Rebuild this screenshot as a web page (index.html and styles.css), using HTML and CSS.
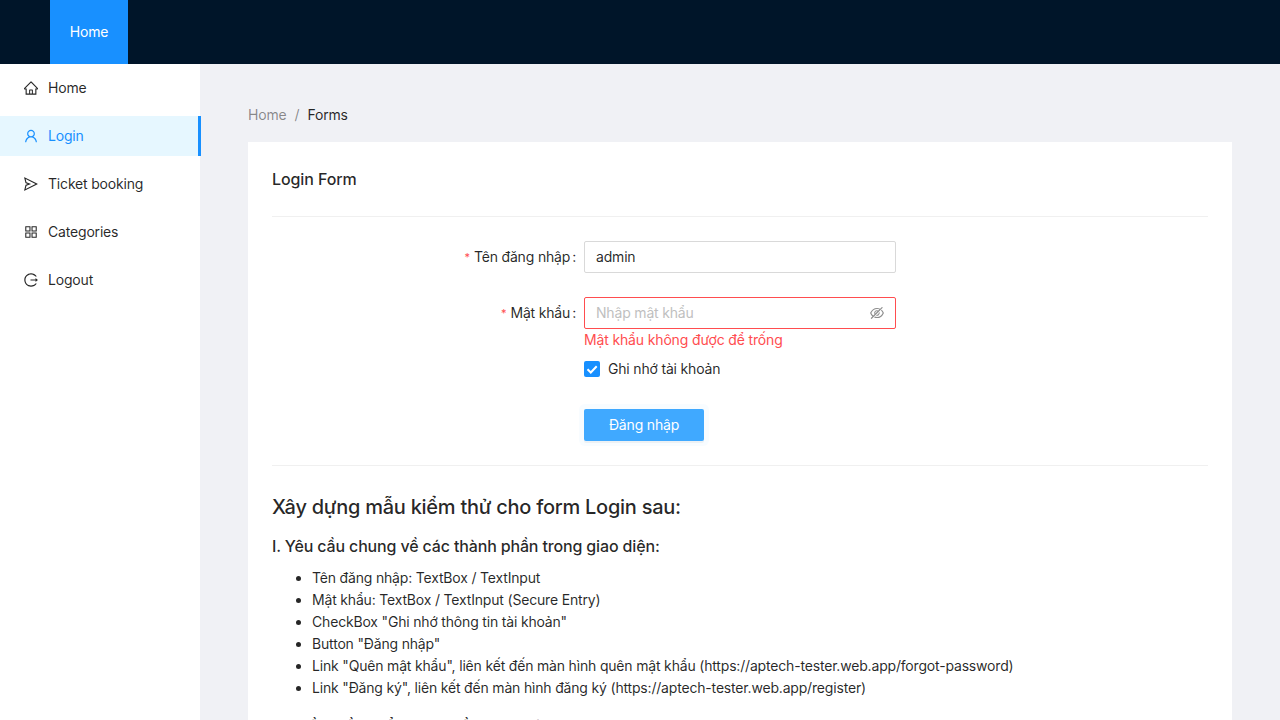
FILE: index.html
```html
<!DOCTYPE html>
<html lang="vi">
<head>
<meta charset="utf-8">
<title>Login</title>
<link rel="stylesheet" href="styles.css">
</head>
<body>
<header class="topbar"><nav><a class="topbar-item">Home</a></nav></header>
<div class="layout">
  <aside class="sidebar">
    <ul class="menu">
      <li class="menu-item"><svg class="icon" viewBox="64 64 896 896"><path d="M946.5 505L560.1 118.8l-25.9-25.9a31.5 31.5 0 00-44.4 0L77.5 505a63.9 63.9 0 00-18.8 46c.4 35.2 29.7 63.3 64.9 63.3h42.5V940h691.8V614.3h43.4c17.1 0 33.2-6.7 45.3-18.8a63.6 63.6 0 0018.7-45.3c0-17-6.7-33.1-18.8-45.2zM568 868H456V664h112v204zm217.9-325.7V868H632V640c0-22.1-17.9-40-40-40H432c-22.1 0-40 17.9-40 40v228H238.1V542.3h-96l370-369.7 23.1 23.1L882 542.3h-96.1z"/></svg><span>Home</span></li>
      <li class="menu-item selected"><svg class="icon" viewBox="64 64 896 896"><path d="M858.5 763.6a374 374 0 00-80.6-119.5 375.63 375.63 0 00-119.5-80.6c-.4-.2-.8-.3-1.2-.5C719.5 518 760 444.7 760 362c0-137-111-248-248-248S264 225 264 362c0 82.7 40.5 156 102.8 201.1-.4.2-.8.3-1.2.5-44.8 18.9-85 46-119.5 80.6a375.63 375.63 0 00-80.6 119.5A371.7 371.7 0 00136 901.8a8 8 0 008 8.2h60c4.4 0 7.9-3.5 8-7.8 2-77.2 33-149.5 87.8-204.3 56.7-56.7 132-87.9 212.2-87.9s155.5 31.2 212.2 87.9C779 752.7 810 825 812 902.2c.1 4.4 3.6 7.8 8 7.8h60a8 8 0 008-8.2c-1-47.8-10.9-94.3-29.5-138.2zM512 534c-45.9 0-89.1-17.9-121.6-50.4S340 407.9 340 362c0-45.9 17.9-89.1 50.4-121.6S466.1 190 512 190s89.1 17.9 121.6 50.4S684 316.1 684 362c0 45.9-17.9 89.1-50.4 121.6S557.9 534 512 534z"/></svg><span>Login</span></li>
      <li class="menu-item"><svg class="icon" viewBox="64 64 896 896"><path d="M931.4 498.9L94.9 79.5c-3.4-1.7-7.3-2.1-11-1.2a15.99 15.99 0 00-11.7 19.3l86.2 352.2c1.3 5.3 5.2 9.6 10.4 11.3l147.7 50.7-147.6 50.7c-5.2 1.8-9.1 6-10.3 11.3L72.2 926.5c-.9 3.7-.5 7.6 1.2 10.9 3.9 7.9 13.5 11.1 21.5 7.2l836.5-417c3.1-1.5 5.6-4.1 7.2-7.1 3.9-8 .7-17.6-7.2-21.6zM170.8 826.3l50.3-205.6 295.2-101.3c2.3-.8 4.2-2.6 5-5 1.4-4.2-.8-8.7-5-10.2L221.1 403 171 198.2l628 314.9-628.2 313.2z"/></svg><span>Ticket booking</span></li>
      <li class="menu-item"><svg class="icon" viewBox="64 64 896 896"><path fill-rule="evenodd" d="M160 144h304a16 16 0 0116 16v304a16 16 0 01-16 16H160a16 16 0 01-16-16V160a16 16 0 0116-16zm52 68v200h200V212zM560 144h304a16 16 0 0116 16v304a16 16 0 01-16 16H560a16 16 0 01-16-16V160a16 16 0 0116-16zm52 68v200h200V212zM160 544h304a16 16 0 0116 16v304a16 16 0 01-16 16H160a16 16 0 01-16-16V560a16 16 0 0116-16zm52 68v200h200V612zM560 544h304a16 16 0 0116 16v304a16 16 0 01-16 16H560a16 16 0 01-16-16V560a16 16 0 0116-16zm52 68v200h200V612z"/></svg><span>Categories</span></li>
      <li class="menu-item"><svg class="icon" viewBox="64 64 896 896"><path d="M868 732h-70.3c-4.8 0-9.3 2.1-12.3 5.8-7 8.5-14.5 16.7-22.4 24.5a353.84 353.84 0 01-112.7 75.9A352.8 352.8 0 01512.4 866c-47.9 0-94.3-9.4-137.9-27.8a353.84 353.84 0 01-112.7-75.9 353.28 353.28 0 01-76-112.5C167.3 606.2 158 559.9 158 512s9.4-94.2 27.8-137.8c17.8-42.1 43.4-80 76-112.5s70.5-58.1 112.7-75.9c43.6-18.4 90-27.8 137.9-27.8 47.9 0 94.3 9.3 137.9 27.8 42.2 17.8 80.1 43.4 112.7 75.9 7.9 7.9 15.3 16.1 22.4 24.5 3 3.7 7.6 5.8 12.3 5.8H868c6.3 0 10.2-7 6.7-12.3C798 160.5 663.8 81.6 511.3 82 271.7 82.6 79.6 277.1 82 516.4 84.4 751.9 276.2 942 512.4 942c152.1 0 285.7-78.8 362.3-197.7 3.4-5.3-.4-12.3-6.7-12.3zm88.9-226.3L815 393.7c-5.3-4.2-13-.4-13 6.3v76H488c-4.4 0-8 3.6-8 8v56c0 4.4 3.6 8 8 8h314v76c0 6.7 7.8 10.5 13 6.3l141.9-112a8 8 0 000-12.6z"/></svg><span>Logout</span></li>
    </ul>
  </aside>
  <main class="content">
    <nav class="breadcrumb"><span>Home</span><span class="separator">/</span><span class="current">Forms</span></nav>
    <section class="card">
      <h5 class="card-title">Login Form</h5>
      <hr class="divider">
      <form class="form">
        <div class="form-row name-row">
          <label class="label" for="username"><span class="required">*</span><span class="label-text">Tên đăng nhập</span><span class="colon">:</span></label>
          <div class="field"><input class="input" id="username" type="text" value="admin"></div>
        </div>
        <div class="form-row">
          <label class="label" for="password"><span class="required">*</span><span class="label-text">Mật khẩu</span><span class="colon">:</span></label>
          <div>
            <div class="field error"><input class="input" id="password" type="password" placeholder="Nhập mật khẩu"><svg class="icon eye" viewBox="64 64 896 896"><path d="M942.2 486.2Q889.47 375.11 816.7 305l-50.88 50.88C807.31 395.53 843.45 447.4 874.7 512 791.5 684.2 673.4 766 512 766q-72.67 0-133.87-22.38L323 798.75Q408 838 512 838q288.3 0 430.2-300.3a60.29 60.29 0 000-51.5zm-63.57-320.64L836 122.88a8 8 0 00-11.32 0L715.31 232.2Q624.86 186 512 186q-288.3 0-430.2 300.3a60.3 60.3 0 000 51.5q56.69 119.4 136.5 191.41L112.48 835a8 8 0 000 11.31L155.17 889a8 8 0 0011.31 0l712.15-712.12a8 8 0 000-11.32zM149.3 512C232.6 339.8 350.7 258 512 258c54.54 0 104.13 9.36 149.12 28.39l-70.3 70.3a176 176 0 00-238.13 238.13l-83.42 83.42C223.1 637.49 183.3 582.28 149.3 512zm246.7 0a112.11 112.11 0 01146.2-106.69L401.31 546.2A112 112 0 01396 512z"/><path d="M508 624c-3.46 0-6.87-.16-10.25-.47l-52.82 52.82a176.09 176.09 0 00227.42-227.42l-52.82 52.82c.31 3.38.47 6.79.47 10.25a111.94 111.94 0 01-112 112z"/></svg></div>
            <div class="error-message">Mật khẩu không được để trống</div>
          </div>
        </div>
        <div class="form-row remember-row">
          <label class="checkbox"><span class="checkbox-box"><svg viewBox="0 0 16 16"><path d="M3.5 8.2l3.3 3.3 5.9-6.2" fill="none" stroke="#fff" stroke-width="2"/></svg></span><span>Ghi nhớ tài khoản</span></label>
        </div>
        <div class="form-row"><button class="submit" type="button">Đăng nhập</button></div>
      </form>
      <hr class="divider">
      <h4 class="heading">Xây dựng mẫu kiểm thử cho form Login sau:</h4>
      <h5 class="subheading">I. Yêu cầu chung về các thành phần trong giao diện:</h5>
      <ul class="list">
        <li>Tên đăng nhập: TextBox / TextInput</li>
        <li>Mật khẩu: TextBox / TextInput (Secure Entry)</li>
        <li>CheckBox "Ghi nhớ thông tin tài khoản"</li>
        <li>Button "Đăng nhập"</li>
        <li>Link "Quên mật khẩu", liên kết đến màn hình quên mật khẩu (https://aptech-tester.web.app/forgot-password)</li>
        <li>Link "Đăng ký", liên kết đến màn hình đăng ký (https://aptech-tester.web.app/register)</li>
      </ul>
      <h5 class="subheading">II. Phần mềm kiểm thử phần giao diện:</h5>
    </section>
  </main>
</div>
</body>
</html>
```
FILE: styles.css
```css
* { box-sizing: border-box; }
body {
  margin: 0;
  height: 720px;
  overflow: hidden;
  display: flex;
  flex-direction: column;
  background: #f0f2f5;
  color: rgba(0, 0, 0, .85);
  font: 14px/22px Inter, sans-serif;
  letter-spacing: -.18px;
}
ul { margin: 0; padding: 0; }
.topbar { height: 64px; flex: none; padding-left: 50px; background: #001529; }
.topbar nav { display: flex; }
.topbar-item { width: 78px; text-align: center; line-height: 64px; color: #fff; background: #1890ff; }
.layout { flex: 1; min-height: 0; display: flex; }
.sidebar { width: 200px; flex: none; background: #fff; position: relative; z-index: 1; }
.menu { width: 201px; list-style: none; padding-top: 4px; }
.menu-item { display: flex; align-items: center; gap: 10px; height: 40px; margin-bottom: 8px; padding-left: 24px; }
.selected { color: #1890ff; background: #e6f7ff; border-right: 3px solid #1890ff; }
.icon { width: 14px; height: 14px; fill: currentColor; flex: none; }
.content { flex: 1; min-height: 0; overflow: hidden; padding: 40px 48px 0; background: #f0f1f5; }
.breadcrumb { display: flex; height: 22px; margin-bottom: 16px; color: rgba(0, 0, 0, .45); }
.separator { margin: 0 8px; }
.current { color: rgba(0, 0, 0, .85); }
.card { height: 578px; overflow: hidden; padding: 24px 24px 0; background: #fff; }
.card-title { margin: 2px 0 25px; font-size: 16px; line-height: 23px; font-weight: 500; letter-spacing: -.1px; }
.divider { margin: 0; border: 0; border-top: 1px solid rgba(0, 0, 0, .06); }
.form { padding: 24px 0; }
.form-row { display: grid; grid-template-columns: 312px 312px; }
.name-row { margin-bottom: 24px; }
.label { display: flex; justify-content: flex-end; align-items: center; height: 32px; }
.required { margin-right: 4px; color: #ff4d4f; font-size: 11px; line-height: 14px; }
.colon { margin: 0 8px 0 2px; }
.field { display: flex; align-items: center; height: 32px; padding: 0 11px; border: 1px solid #d9d9d9; border-radius: 2px; }
.error { border-color: #ff4d4f; }
.input { flex: 1; min-width: 0; padding: 0; border: 0; outline: 0; background: none; color: inherit; font: inherit; letter-spacing: inherit; }
.input::placeholder { color: #bfbfbf; opacity: 1; }
.eye { color: rgba(0, 0, 0, .45); }
.error-message { height: 24px; color: #ff4d4f; letter-spacing: -.15px; }
.remember-row { height: 56px; }
.checkbox { grid-column: 2; display: flex; align-items: center; gap: 8px; height: 32px; }
.checkbox-box { display: flex; width: 16px; height: 16px; border-radius: 2px; background: #1890ff; }
.submit { grid-column: 2; width: 120px; height: 32px; padding: 0; border: 0; border-radius: 2px; background: #40a9ff; color: #fff; font: inherit; letter-spacing: inherit; box-shadow: 0 2px 0 rgba(0, 0, 0, .045), 0 0 0 5px rgba(24, 144, 255, .03); }
.heading { margin: 27px 0 12px; font-size: 20px; line-height: 28px; font-weight: 500; letter-spacing: -.26px; }
.subheading { margin: 13px 0 9px; font-size: 16px; line-height: 24px; font-weight: 500; letter-spacing: -.15px; }
.list { margin-bottom: 15px; padding-left: 40px; }
.list + .subheading { margin-top: 15px; }
```
